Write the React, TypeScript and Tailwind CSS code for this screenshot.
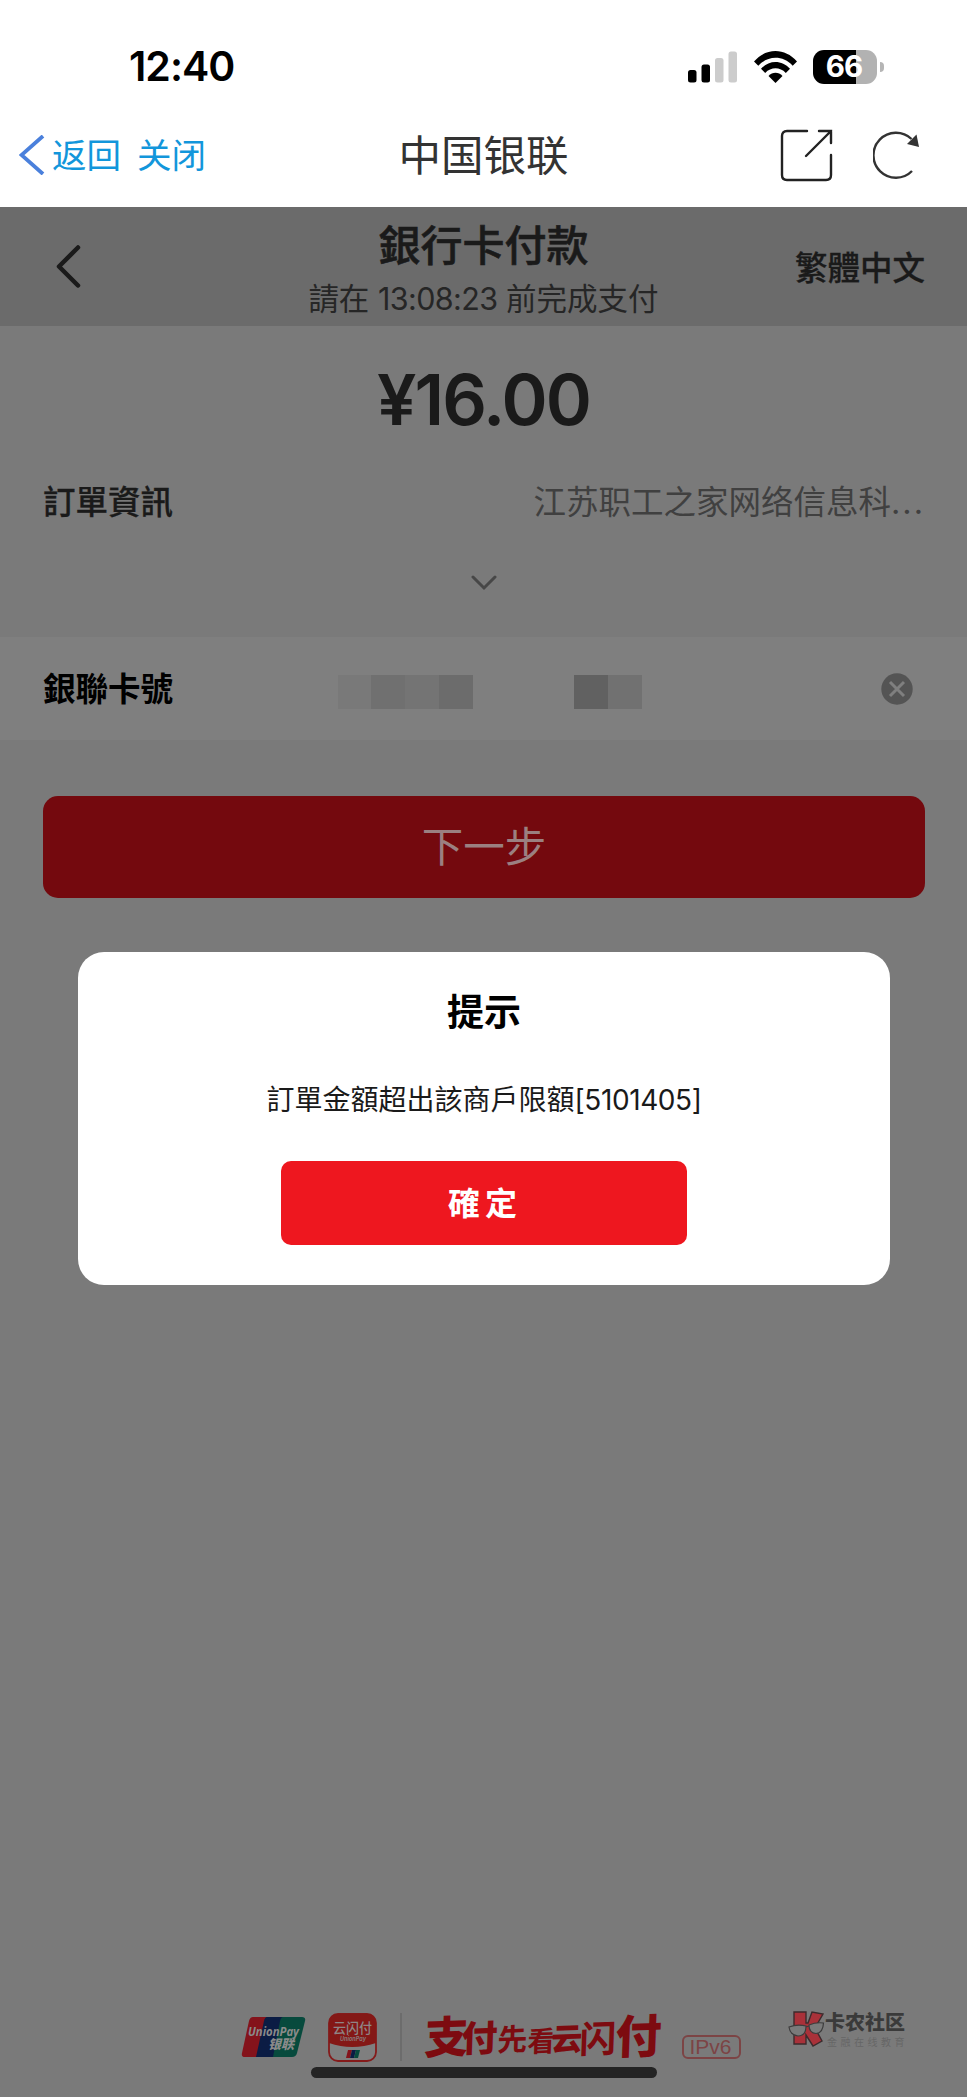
import type { ReactNode } from 'react';

const SLOGAN = [
  { char: '支', x: 0, y: 42, size: 44, weight: 900 },
  { char: '付', x: 37, y: 40, size: 36, weight: 900 },
  { char: '先', x: 73, y: 39, size: 30, weight: 700 },
  { char: '看', x: 103, y: 40, size: 28, weight: 700 },
  { char: '云', x: 127, y: 39, size: 31, weight: 900 },
  { char: '闪', x: 155, y: 41, size: 37, weight: 700 },
  { char: '付', x: 191, y: 42, size: 46, weight: 900 },
];

function StatusBar() {
  return (
    <div className="flex h-[104px] items-center pt-[29px] pr-[84px] pl-[129px]">
      <span className="text-[41px] leading-none font-semibold tracking-[-1px] text-black">12:40</span>
      <div className="ml-auto flex items-center">
        <svg width="49" height="32" viewBox="0 0 49 32" aria-hidden="true">
          <rect x="0" y="19" width="8.5" height="12.5" rx="2.5" fill="#000" />
          <rect x="13.5" y="13.5" width="8.5" height="18" rx="2.5" fill="#000" />
          <rect x="27" y="7" width="8.5" height="24.5" rx="2.5" fill="#cccccc" />
          <rect x="40.5" y="0.5" width="8.5" height="31" rx="2.5" fill="#cccccc" />
        </svg>
        <svg className="ml-[17px]" width="43" height="32" viewBox="0 0 43 32" aria-hidden="true">
          <path d="M0 10.5C12-3.5 31-3.5 43 10.5L38.7 14.7C29 4.2 14 4.2 4.3 14.7Z" fill="#000" />
          <path d="M7 17.8C15 8.7 28 8.7 36 17.8L31.8 21.9C26 15.8 17 15.8 11.2 21.9Z" fill="#000" />
          <path d="M14.5 25C18.5 20.7 24.5 20.7 28.5 25L21.5 32Z" fill="#000" />
        </svg>
        <div className="ml-[16px] flex items-center">
          <div className="flex h-[34px] w-[64px] items-center justify-center rounded-[11px] bg-[linear-gradient(to_right,#000_67%,#b2b2b2_67%)]">
            <span className="pr-[2px] text-[29.5px] leading-none font-bold tracking-[-0.8px] text-white">66</span>
          </div>
          <div className="ml-[3px] h-[10px] w-[4px] rounded-r-full bg-[#b5b5b5]" />
        </div>
      </div>
    </div>
  );
}

function NavBar() {
  return (
    <div className="grid h-[103px] grid-cols-[1fr_auto_1fr] items-center pr-[47px] pl-[19px]">
      <div className="flex items-center text-[34.5px] leading-none text-[#1296db]">
        <svg className="-mt-[2px]" width="26" height="40" viewBox="0 0 26 40" fill="none" stroke="#4a80dc" strokeWidth="3.8" aria-hidden="true">
          <path d="M24 1L2.5 20L24 39" />
        </svg>
        <span className="ml-[7px] pt-[1px]">返回</span>
        <span className="ml-[16px] pt-[1px]">关闭</span>
      </div>
      <span className="pt-[1px] pl-[27px] text-[42.5px] leading-none text-[#333]">中国银联</span>
      <div className="flex items-center justify-end">
        <svg width="53" height="53" viewBox="0 0 53 53" fill="none" stroke="#222" strokeWidth="2.4" strokeLinecap="round" aria-hidden="true">
          <path d="M27 2H7Q2 2 2 7V46Q2 51 7 51H46Q51 51 51 46V26M39 2H51V14M51 2L26 27" />
        </svg>
        <svg className="-mt-[2px] ml-[40px]" width="48" height="48" viewBox="0 0 48 48" fill="none" stroke="#333" strokeWidth="2.4" aria-hidden="true">
          <path d="M39 40A22.5 22.5 0 1 1 38.5 8" />
          <path d="M43.5 3.5L46 16L34 13Z" fill="#333" stroke="none" />
        </svg>
      </div>
    </div>
  );
}

function PayHeader() {
  return (
    <div className="grid h-[119px] grid-cols-[1fr_auto_1fr] bg-[#6b6b6b] pr-[42px] pl-[55px] text-[#1a1a1a]">
      <svg className="mt-[37px]" width="26" height="45" viewBox="0 0 26 45" fill="none" stroke="currentColor" strokeWidth="4.5" strokeLinecap="round" strokeLinejoin="round" aria-hidden="true">
        <path d="M23 3.5L4 22.5L23 41.5" />
      </svg>
      <div className="-ml-[13px] pt-[9px] text-center">
        <h1 className="text-[42px] leading-[60px] font-medium [-webkit-text-stroke:0.6px]">銀行卡付款</h1>
        <p className="mt-[3px] text-[30.5px] leading-[40px] text-[#262626]">
          請在 <span className="tracking-[-0.6px]">13:08:23</span> 前完成支付
        </p>
      </div>
      <span className="pt-[40px] text-right text-[32.5px] leading-[44px] font-medium [-webkit-text-stroke:0.3px]">繁體中文</span>
    </div>
  );
}

function MosaicGroup({ children }: { children: ReactNode }) {
  return <div className="flex h-[34px]">{children}</div>;
}

function CardRow() {
  return (
    <div className="flex h-[103px] items-center bg-[#7f7f7f] pr-[54px] pl-[43px]">
      <span className="w-[295px] pt-[3px] text-[32.5px] leading-none font-bold text-black">銀聯卡號</span>
      <div className="mt-[6px] flex">
        <MosaicGroup>
          <div className="w-[33px] bg-[#797979]" />
          <div className="w-[34px] bg-[#707070]" />
          <div className="w-[34px] bg-[#747474]" />
          <div className="w-[34px] bg-[#6c6c6c]" />
        </MosaicGroup>
        <div className="w-[101px]" />
        <MosaicGroup>
          <div className="w-[34px] bg-[#616161]" />
          <div className="w-[34px] bg-[#717171]" />
        </MosaicGroup>
      </div>
      <svg className="ml-auto" width="32" height="32" viewBox="0 0 32 32" aria-hidden="true">
        <circle cx="16" cy="16" r="15.7" fill="#545454" />
        <path d="M9 9L23 23M23 9L9 23" stroke="#7f7f7f" strokeWidth="3" />
      </svg>
    </div>
  );
}

function UnionPayLogo() {
  return (
    <svg className="overflow-visible" width="63" height="41" viewBox="0 0 63 41" aria-hidden="true">
      <path d="M11 0H27L18 40H3Q-1 40 0 36L7 4Q8 0 11 0Z" fill="#84131b" />
      <path d="M25 0H43L34 40H14L22 4Q23 0 25 0Z" fill="#0b1c44" />
      <path d="M41 0H60Q64 0 63 4L55 36Q54 40 50 40H31L38 4Q39 0 41 0Z" fill="#074a3d" />
      <text x="6" y="19" fontSize="13" fontWeight="700" fontStyle="italic" fill="#8a8a8a" textLength="51" lengthAdjust="spacingAndGlyphs" fontFamily="Open Sans, sans-serif">UnionPay</text>
      <text x="26" y="32" fontSize="13" fontWeight="900" fontStyle="italic" fill="#8a8a8a" textLength="26" lengthAdjust="spacingAndGlyphs">银联</text>
    </svg>
  );
}

function QuickPassLogo() {
  return (
    <svg className="ml-[23px]" width="49" height="49" viewBox="0 0 49 49" aria-hidden="true">
      <rect x="1" y="1" width="47" height="47" rx="9" fill="#7f7f7f" stroke="#841b1b" strokeWidth="1.8" />
      <path d="M1 10Q1 1 10 1H39Q48 1 48 10V30Q24 38 1 30Z" fill="#841816" />
      <text x="5" y="20" fontSize="14" fontWeight="500" fill="#8f8585" textLength="39" lengthAdjust="spacingAndGlyphs">云闪付</text>
      <text x="12" y="28" fontSize="6" fontWeight="700" fontStyle="italic" fill="#8a7777" textLength="26" lengthAdjust="spacingAndGlyphs">UnionPay</text>
      <path d="M20 37H24L22 45H18Z" fill="#84131b" />
      <path d="M24 37H28L26 45H22Z" fill="#0b1c44" />
      <path d="M28 37H32L30 45H26Z" fill="#074a3d" />
    </svg>
  );
}

function Footer() {
  return (
    <div className="mt-auto pb-[19px]">
      <div className="flex h-[48px] items-center pl-[242px]">
        <UnionPayLogo />
        <QuickPassLogo />
        <div className="ml-[23px] h-[48px] w-[2px] bg-[#6c6c6c]" />
        <svg className="ml-[22px] overflow-visible" width="240" height="50" viewBox="0 0 240 50" fill="#7d0b10">
          {SLOGAN.map((item, index) => (
            <text key={index} fontSize={item.size} fontWeight={item.weight} transform={`translate(${item.x} ${item.y}) rotate(-2) skewX(-4)`}>
              {item.char}
            </text>
          ))}
        </svg>
        <span className="mt-[19px] ml-[18px] flex h-[24px] w-[59px] items-center justify-center rounded-[6px] border-2 border-[#7c4445] pr-[2px] font-['Liberation_Sans'] text-[21px] leading-none text-[#7c4445]">
          IPv6
        </span>
      </div>
      <div className="mt-[6px] ml-[311px] h-[11px] w-[346px] rounded-full bg-[#242424]" />
    </div>
  );
}

function Watermark() {
  return (
    <div className="absolute right-[60px] bottom-[48px] flex items-start">
      <svg width="37" height="38" viewBox="0 0 37 38" aria-hidden="true">
        <path d="M6 2H18V13H20L24 2L35 4L27 18L34 31L25 36L18 25V34H6Z" fill="#a93139" stroke="#3d2b2d" strokeWidth="1.4" />
        <path d="M1 17Q9 14 18 16Q18 26 10 26Q2 25 1 17ZM21 15Q28 12 35.5 13Q35 23 28 23.5Q21 23 21 15ZM18 17L21 16" fill="#7a7a7a" stroke="#3c3c3c" strokeWidth="1.2" />
      </svg>
      <div>
        <p className="mt-[2px] text-[20px] leading-[22px] font-black text-[#3a3a3a]">卡农社区</p>
        <p className="mt-[1px] ml-[2px] text-[10px] leading-[14px] tracking-[3.5px] text-[#666]">金融在线教育</p>
      </div>
    </div>
  );
}

function AlertDialog() {
  return (
    <div className="absolute top-[952px] left-[78px] flex h-[333px] w-[812px] flex-col items-center rounded-[26px] bg-white">
      <h2 className="mt-[36px] text-[37px] leading-[50px] font-bold text-black">提示</h2>
      <p className="mt-[42px] text-[28px] leading-[40px] text-[#1a1a1a]">
        訂單金額超出該商戶限額<span className="tracking-[-0.4px]">[5101405]</span>
      </p>
      <button className="mt-[41px] h-[84px] w-[406px] rounded-[10px] bg-[#ee171f] pt-[1px] pl-[2px] text-[32px] leading-none font-bold tracking-[5px] text-white">
        確定
      </button>
    </div>
  );
}

export default function App() {
  return (
    <div className="relative flex h-[2097px] w-[968px] flex-col overflow-hidden bg-white font-[Inter,'Noto_Sans_CJK_SC',sans-serif]">
      <StatusBar />
      <NavBar />

      {/* 결제 페이지 영역 */}
      <div lang="zh-Hant" className="mr-px flex flex-1 flex-col bg-[#7a7a7a] font-[Inter,'Noto_Sans_CJK_TC',sans-serif]">
        <PayHeader />
        <div className="h-[311px] pt-[34px] text-[#1a1a1a]">
          <p className="text-center text-[70px] leading-[80px] font-semibold tracking-[-1.9px]">¥16.00</p>
          <div className="mt-[41px] flex justify-between pr-[42px] pl-[43px] text-[32.5px] leading-[44px]">
            <span className="font-medium [-webkit-text-stroke:0.3px]">訂單資訊</span>
            <span lang="zh-Hans" className="font-[Inter,'Noto_Sans_CJK_SC',sans-serif] text-[#404040]">
              江苏职工之家网络信息科<span className="tracking-[2px]">...</span>
            </span>
          </div>
          <svg className="mx-auto mt-[50px]" width="26" height="16" viewBox="0 0 26 16" fill="none" stroke="#474747" strokeWidth="3" strokeLinecap="round" aria-hidden="true">
            <path d="M2 2L13 13L24 2" />
          </svg>
        </div>
        <CardRow />
        <button className="mt-[56px] mr-[42px] ml-[43px] h-[102px] rounded-[15px] bg-[#74090e] pt-[1px] text-[41.5px] leading-none text-[#9b8081]">
          下一步
        </button>
        <Footer />
      </div>

      <Watermark />
      <AlertDialog />
    </div>
  );
}
